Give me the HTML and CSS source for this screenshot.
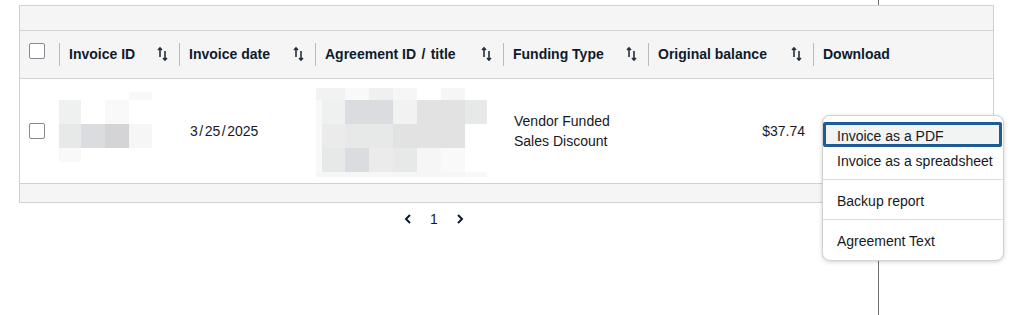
FILE: index.html
```html
<!DOCTYPE html>
<html lang="en">

<head>
	<meta charset="utf-8">
	<meta name="viewport" content="width=device-width, initial-scale=1.0">
	<title>Invoices</title>
	<link rel="stylesheet" href="styles.css">
</head>

<body>
	<div class="split-line"></div>

	<main>
		<div class="table-wrap">
			<div class="table-top"></div>

			<!-- header -->
			<div class="row head">
				<div class="cell check-cell"><span class="checkbox"></span></div>
				<div class="cell th">
					<div class="th-inner"><span>Invoice ID</span>
						<svg class="sort" viewBox="0 0 12 16"><path d="M3 2V11M1 4L3 2L5 4M8 5V14M6 12L8 14L10 12" /></svg>
					</div>
				</div>
				<div class="cell th">
					<div class="th-inner"><span>Invoice date</span>
						<svg class="sort" viewBox="0 0 12 16"><path d="M3 2V11M1 4L3 2L5 4M8 5V14M6 12L8 14L10 12" /></svg>
					</div>
				</div>
				<div class="cell th">
					<div class="th-inner"><span>Agreement ID <span class="slash">/</span> title</span>
						<svg class="sort" viewBox="0 0 12 16"><path d="M3 2V11M1 4L3 2L5 4M8 5V14M6 12L8 14L10 12" /></svg>
					</div>
				</div>
				<div class="cell th">
					<div class="th-inner"><span>Funding Type</span>
						<svg class="sort" viewBox="0 0 12 16"><path d="M3 2V11M1 4L3 2L5 4M8 5V14M6 12L8 14L10 12" /></svg>
					</div>
				</div>
				<div class="cell th">
					<div class="th-inner"><span>Original balance</span>
						<svg class="sort" viewBox="0 0 12 16"><path d="M3 2V11M1 4L3 2L5 4M8 5V14M6 12L8 14L10 12" /></svg>
					</div>
				</div>
				<div class="cell th">
					<div class="th-inner"><span>Download</span></div>
				</div>
			</div>

			<!-- row -->
			<div class="row body-row">
				<div class="cell check-cell"><span class="checkbox"></span></div>
				<div class="cell td blur-cell">
					<div class="mosaic id-mosaic">
						<span class="p0"></span><span class="p0"></span><span class="p0"></span><span class="p1"></span>
						<span class="p4"></span><span class="p0"></span><span class="p1"></span><span class="p0"></span>
						<span class="p6"></span><span class="p8"></span><span class="p9"></span><span class="p2"></span>
						<span class="p1"></span><span class="p0"></span><span class="p0"></span><span class="p0"></span>
					</div>
				</div>
				<div class="cell td">3<span class="slash">/</span>25<span class="slash">/</span>2025</div>
				<div class="cell td blur-cell">
					<div class="mosaic agr-mosaic">
						<span class="p3"></span><span class="p3"></span><span class="p1"></span><span class="p4"></span><span class="p2"></span><span class="p0"></span><span class="p2"></span><span class="p0"></span>
						<span class="p1"></span><span class="p4"></span><span class="p8"></span><span class="p8"></span><span class="p3"></span><span class="p7"></span><span class="p7"></span><span class="p6"></span>
						<span class="p1"></span><span class="p5"></span><span class="p6"></span><span class="p6"></span><span class="p7"></span><span class="p7"></span><span class="p7"></span><span class="p0"></span>
						<span class="p1"></span><span class="p6"></span><span class="p8"></span><span class="p5"></span><span class="p6"></span><span class="p2"></span><span class="p1"></span><span class="p0"></span>
						<span class="p2"></span><span class="p2"></span><span class="p2"></span><span class="p2"></span><span class="p2"></span><span class="p2"></span><span class="p2"></span><span class="p1"></span>
					</div>
				</div>
				<div class="cell td funding">Vendor Funded<br>Sales Discount</div>
				<div class="cell td num">$37.74</div>
				<div class="cell td download-cell">
					<div class="menu">
						<div class="menu-group">
							<div class="menu-item focused">Invoice as a PDF</div>
							<div class="menu-item">Invoice as a spreadsheet</div>
						</div>
						<div class="menu-group">
							<div class="menu-item">Backup report</div>
						</div>
						<div class="menu-group">
							<div class="menu-item">Agreement Text</div>
						</div>
					</div>
				</div>
			</div>

			<div class="table-foot"></div>
		</div>

		<nav class="pager">
			<button class="page-btn"><svg viewBox="0 0 8 10"><path d="M6 1L2 5L6 9" /></svg></button>
			<button class="page-btn current">1</button>
			<button class="page-btn"><svg viewBox="0 0 8 10"><path d="M2 1L6 5L2 9" /></svg></button>
		</nav>
	</main>
</body>

</html>
```

FILE: styles.css
```css
* {
	margin: 0;
	box-sizing: border-box;
}

body {
	font-family: "Liberation Sans", Arial, sans-serif;
	font-size: 14px;
	color: #16191f;
	background: #fff;
	height: 315px;
	overflow: hidden;
	position: relative;
}

/* thin page divider behind the table */
.split-line {
	position: absolute;
	left: 878px;
	top: 0;
	width: 1px;
	height: 315px;
	background: #6f6f6f;
}

main {
	position: relative;
	z-index: 1;
}

.table-wrap {
	margin: 5px 0 0 19px;
	width: 975px;
	border: 1px solid #d1d1d1;
	background: #fff;
}

.table-top {
	height: 25px;
	background: #f5f5f5;
	border-bottom: 1px solid #d1d1d1;
}

.table-foot {
	height: 18px;
	background: #f5f5f5;
}

.row {
	display: grid;
	grid-template-columns: 39px 120px 136px 188px 145px 165px 1fr;
	border-bottom: 1px solid #d1d1d1;
}

.head {
	height: 48px;
	background: #f5f5f5;
}

.body-row {
	height: 105px;
	align-items: center;
}

.check-cell {
	padding-left: 9px;
}

.head .check-cell {
	padding-top: 12px;
}

.checkbox {
	display: block;
	width: 16px;
	height: 16px;
	border: 1px solid #858a91;
	border-radius: 2px;
	background: #fff;
}

.th {
	padding-top: 12px;
	font-weight: bold;
	color: #0f1b2a;
}

.th-inner {
	display: flex;
	justify-content: space-between;
	align-items: center;
	height: 23px;
	border-left: 1px solid #b8bcc2;
	padding: 0 10px 2px 9px;
	line-height: 20px;
}

.sort {
	width: 12px;
	height: 16px;
	fill: none;
	stroke: #232f3e;
	stroke-width: 1.6;
}

/* the slash in this UI font is wider than in Arial */
.slash {
	padding: 0 1.5px;
}

.td {
	padding-left: 11px;
	line-height: 20px;
}

.funding {
	padding-bottom: 1px;
}

.num {
	text-align: right;
	padding-right: 8px;
}

.blur-cell {
	align-self: start;
	padding-left: 0;
}

.mosaic {
	display: grid;
}

.id-mosaic {
	margin-top: 13px;
	grid-template-columns: 22px 24px 24px 23px;
	grid-template-rows: 8px 24px 24px 14px;
}

.agr-mosaic {
	margin: 9px 0 0 1px;
	grid-template-columns: 6px 23px 24px 24px 24px 24px 24px 22px;
	grid-template-rows: 12px 24px 24px 24px 5px;
}

.p0 { background: transparent; }
.p1 { background: #f9f9f9; }
.p2 { background: #f6f6f6; }
.p3 { background: #f2f2f2; }
.p4 { background: #eff0f0; }
.p5 { background: #ebebeb; }
.p6 { background: #e7e8e8; }
.p7 { background: #e2e2e3; }
.p8 { background: #dbdcdf; }
.p9 { background: #d4d4d6; }

/* download dropdown */
.download-cell {
	position: relative;
	align-self: stretch;
}

.menu {
	position: absolute;
	left: 9px;
	top: 36px;
	width: 182px;
	background: #fff;
	border: 1px solid #d1d1d1;
	border-radius: 8px;
	box-shadow: 0 1px 4px rgba(0, 7, 22, 0.18);
	z-index: 2;
}

.menu-group {
	padding: 7px 0;
}

.menu-group:first-child {
	padding-top: 6px;
}

.menu-group:last-child {
	padding-bottom: 8px;
}

.menu-group + .menu-group {
	border-top: 1px solid #dcdcdc;
}

.menu-item {
	height: 25px;
	line-height: 21px;
	padding: 4px 14px 0;
	white-space: nowrap;
}

.menu-item.focused {
	line-height: 15px;
	padding: 4px 11px 0;
	border: 3px solid #1f5b97;
	border-radius: 2px;
	background: #f2f3f3;
	margin-right: 1px;
}

/* pagination */
.pager {
	display: flex;
	gap: 10px;
	margin: 6px 0 0 400px;
}

.page-btn {
	width: 16px;
	height: 20px;
	padding: 0;
	border: 0;
	background: none;
	font-family: inherit;
	font-size: 14px;
	color: #16191f;
	display: flex;
	align-items: center;
	justify-content: center;
}

.page-btn svg {
	width: 8px;
	height: 10px;
	fill: none;
	stroke: #0f1b2a;
	stroke-width: 2;
}
```
